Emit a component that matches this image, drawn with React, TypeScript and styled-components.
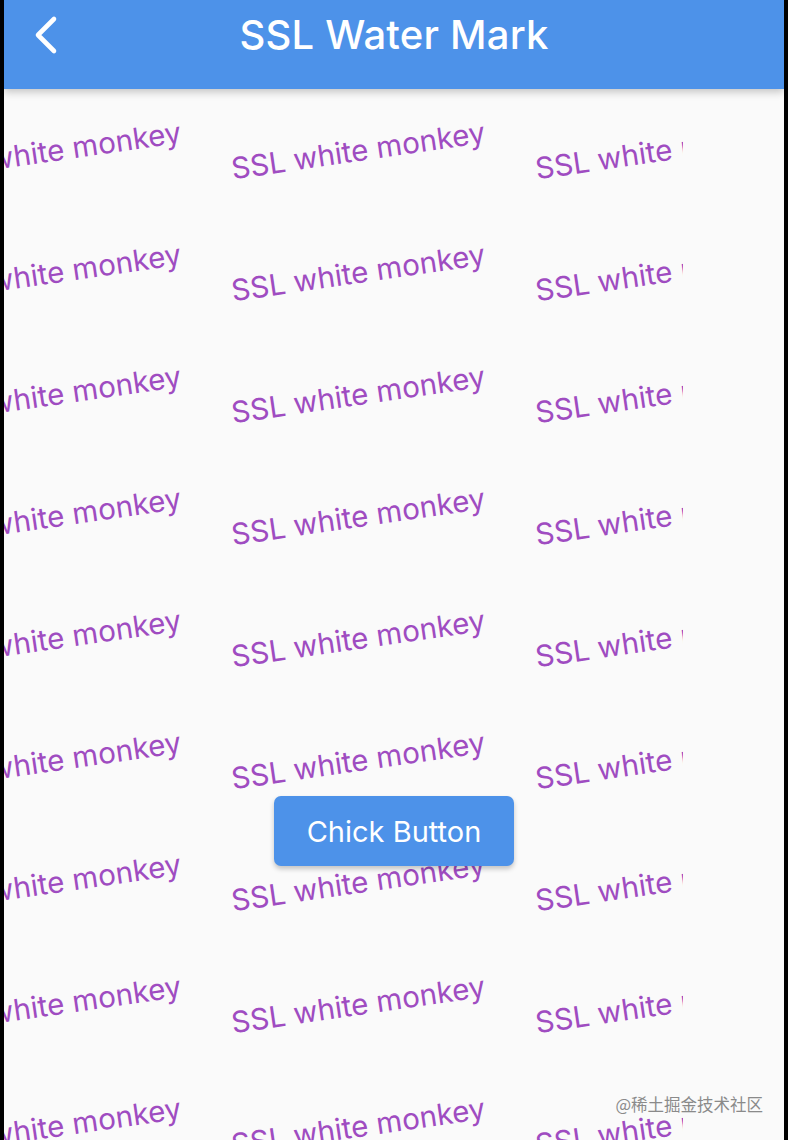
import React from "react";
import styled, { createGlobalStyle } from "styled-components";

const Global = createGlobalStyle`
  html, body { margin: 0; padding: 0; background: #000; }
  body { font-family: "Inter", "Liberation Sans", "Noto Sans CJK SC", sans-serif; }
  * { box-sizing: border-box; }
`;

const Frame = styled.div`
  width: 788px;
  height: 1140px;
  background: #000;
  padding: 0 4px;
  display: flex;
`;

const Screen = styled.div`
  flex: 1;
  background: #fafafa;
  display: flex;
  flex-direction: column;
  position: relative;
  overflow: hidden;
`;

const Header = styled.header`
  height: 89px;
  flex: none;
  background: #4d92e9;
  display: grid;
  grid-template-columns: 1fr auto 1fr;
  align-items: center;
  position: relative;
  z-index: 2;
  box-shadow: 0 3px 8px rgba(0, 0, 0, 0.22);
`;

const BackButton = styled.button`
  justify-self: start;
  margin-left: 22px;
  margin-top: -20px;
  width: 40px;
  height: 48px;
  background: none;
  border: none;
  padding: 0;
  display: flex;
  align-items: center;
  justify-content: center;
  cursor: pointer;
`;

const Title = styled.h1`
  margin: -20px 0 0 0;
  font-family: "Inter", "Liberation Sans", sans-serif;
  font-weight: 500;
  font-size: 40px;
  color: #fff;
  letter-spacing: 0.2px;
`;

const Body = styled.main`
  flex: 1;
  position: relative;
  display: flex;
  flex-direction: column;
  align-items: center;
  padding-top: 707px;
`;

const WatermarkLayer = styled.div`
  position: absolute;
  left: 0;
  top: 0;
  bottom: 0;
  width: 679px;
  overflow: hidden;
  pointer-events: none;
  z-index: 0;
`;

const WatermarkGrid = styled.div`
  display: grid;
  grid-template-columns: repeat(3, 304px);
  grid-auto-rows: 122px;
  margin-left: -102px;
`;

const Tile = styled.div`
  display: flex;
  align-items: center;
  justify-content: center;
`;

const Mark = styled.span`
  display: block;
  white-space: nowrap;
  font-family: "Inter", "Liberation Sans", sans-serif;
  font-size: 29.5px;
  color: #9f4cc1;
  transform: rotate(-8.3deg);
  transform-origin: center;
`;

const ActionButton = styled.button`
  position: relative;
  z-index: 1;
  width: 240px;
  height: 70px;
  border: none;
  border-radius: 7px;
  background: #4d92e9;
  color: #fff;
  font-family: "Inter", "Liberation Sans", sans-serif;
  font-size: 29px;
  font-weight: 400;
  box-shadow: 0 3px 5px rgba(0, 0, 0, 0.22);
  cursor: pointer;
`;

const Credit = styled.div`
  position: absolute;
  right: 21px;
  bottom: 24px;
  font-family: "Noto Sans CJK SC", "Liberation Sans", sans-serif;
  font-size: 16.5px;
  color: #8a8a8a;
  z-index: 3;
`;

const ROWS = 9;
const COLS = 3;

export default function App() {
  const tiles = Array.from({ length: ROWS * COLS });
  return (
    <>
      <Global />
      <Frame>
        <Screen>
          <Header>
            <BackButton aria-label="back">
              <svg width="28" height="40" viewBox="0 0 28 40" fill="none">
                <path
                  d="M22 4 L6 20 L22 36"
                  stroke="#fff"
                  strokeWidth="4.6"
                  strokeLinecap="round"
                  strokeLinejoin="round"
                />
              </svg>
            </BackButton>
            <Title>SSL Water Mark</Title>
            <span />
          </Header>
          <Body>
            <WatermarkLayer>
              <WatermarkGrid>
                {tiles.map((_, i) => (
                  <Tile key={i}>
                    <Mark>SSL white monkey</Mark>
                  </Tile>
                ))}
              </WatermarkGrid>
            </WatermarkLayer>
            <ActionButton>Chick Button</ActionButton>
          </Body>
          <Credit>@稀土掘金技术社区</Credit>
        </Screen>
      </Frame>
    </>
  );
}
